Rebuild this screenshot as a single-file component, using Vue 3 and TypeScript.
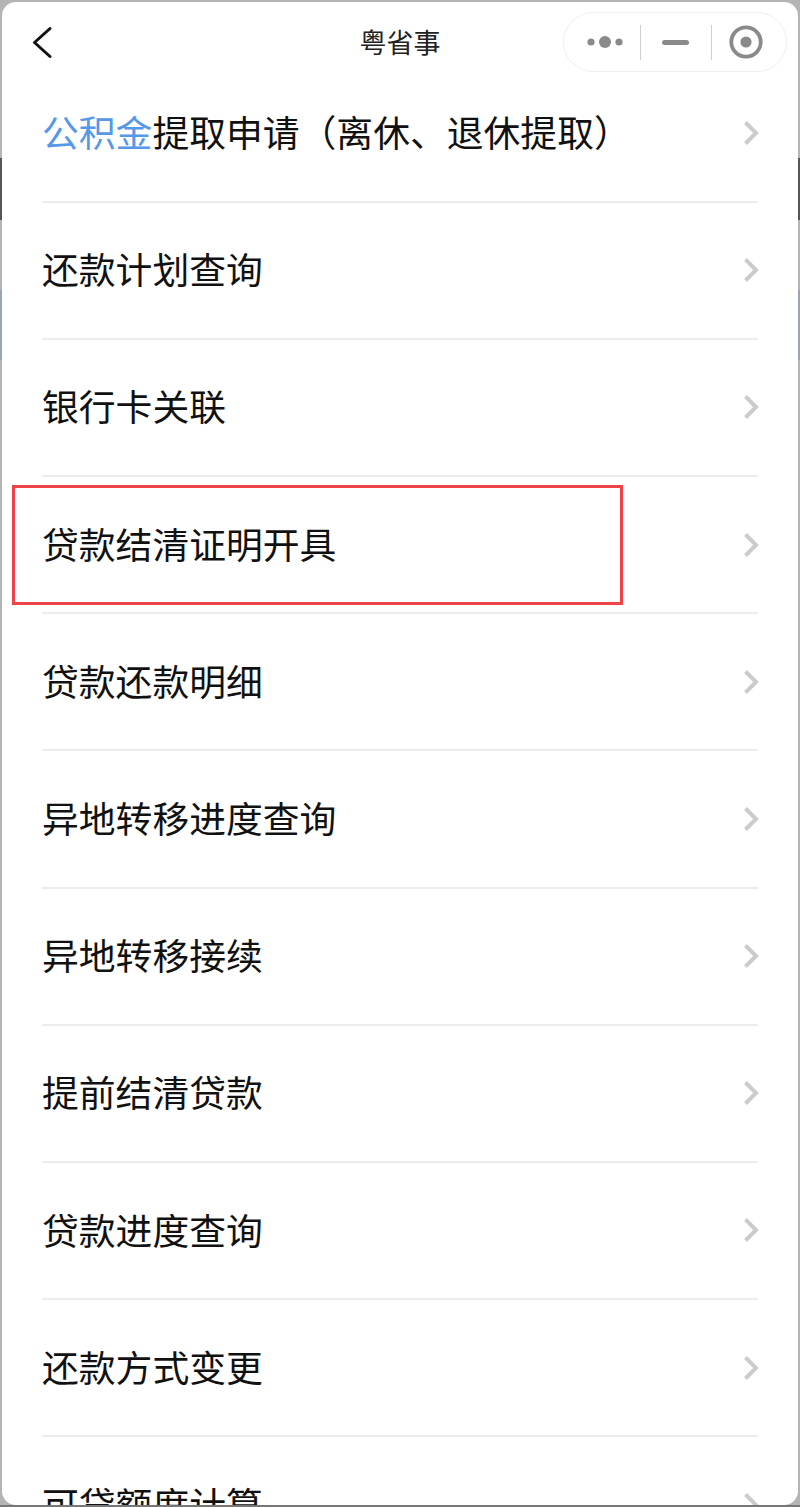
<script setup lang="ts">
interface Row { accent?: string; text: string; marked?: boolean }
const rows: Row[] = [
  { accent: '公积金', text: '提取申请（离休、退休提取）' },
  { text: '还款计划查询' },
  { text: '银行卡关联' },
  { text: '贷款结清证明开具', marked: true },
  { text: '贷款还款明细' },
  { text: '异地转移进度查询' },
  { text: '异地转移接续' },
  { text: '提前结清贷款' },
  { text: '贷款进度查询' },
  { text: '还款方式变更' },
  { text: '可贷额度计算' },
]
</script>

<template>
  <div class="screen">
    <div class="window">
      <header class="nav">
        <svg class="back" width="28" height="36" viewBox="0 0 28 36" fill="none">
          <path d="M22 4.5 L6.5 18.5 L22 32.5" stroke="#111" stroke-width="3" stroke-linecap="round" stroke-linejoin="round" />
        </svg>
        <div class="title">粤省事</div>
        <div class="capsule">
          <svg class="dots" width="40" height="16" viewBox="0 0 40 16">
            <circle cx="6" cy="8" r="3.6" fill="#8a8a8a" />
            <circle cx="20" cy="8" r="6" fill="#8a8a8a" />
            <circle cx="34" cy="8" r="3.6" fill="#8a8a8a" />
          </svg>
          <span class="divider"></span>
          <span class="minus"></span>
          <span class="divider"></span>
          <svg class="target" width="36" height="36" viewBox="0 0 36 36">
            <circle cx="18" cy="18" r="14.7" fill="none" stroke="#8a8a8a" stroke-width="3.8" />
            <circle cx="18" cy="18" r="5.6" fill="#8a8a8a" />
          </svg>
        </div>
      </header>
      <ul class="list">
        <li v-for="row in rows" :key="row.text" class="row">
          <span class="label"><span v-if="row.accent" class="accent">{{ row.accent }}</span>{{ row.text }}</span>
          <svg class="chev" width="16" height="26" viewBox="0 0 16 26" fill="none">
            <path d="M2.5 2.5 L13 13 L2.5 23.5" stroke="#cbcbcb" stroke-width="4" />
          </svg>
          <span v-if="row.marked" class="mark"></span>
        </li>
      </ul>
    </div>
  </div>
</template>

<style>
html, body { margin: 0; background: #b0b0b0; }
</style>

<style scoped>
.screen {
  width: 800px;
  height: 1507px;
  padding: 2px;
  box-sizing: border-box;
  background: linear-gradient(
    to bottom,
    #b4b4b4 0, #b4b4b4 158px,
    #555 158px, #555 220px,
    #b4b4b4 220px, #b4b4b4 290px,
    #9aa5b5 290px, #9aa5b5 360px,
    #b4b4b4 360px, #b4b4b4 1505px,
    #777 1505px, #777 1507px
  );
  overflow: hidden;
  font-family: "Noto Sans CJK SC", "Noto Sans", sans-serif;
}
.window {
  height: 1503px;
  background: #fff;
  border-radius: 14px;
  overflow: hidden;
  position: relative;
}
.nav {
  height: 63.4px;
  position: relative;
  display: flex;
  align-items: center;
  justify-content: center;
}
.back { position: absolute; left: 26px; top: 22px; }
.title { font-size: 27px; color: #222; line-height: 1; margin-top: 15px; }
.capsule {
  position: absolute;
  left: 561px;
  top: 10px;
  width: 224px;
  height: 60px;
  box-sizing: border-box;
  border: 1.5px solid #efefef;
  border-radius: 30px;
  display: grid;
  grid-template-columns: 76px 1px 70px 1px 1fr;
  align-items: center;
  justify-items: center;
}
.divider { width: 1px; height: 35px; background: #cfcfcf; }
.dots { display: block; margin-left: 6px; }
.minus { width: 27px; height: 5px; border-radius: 3px; background: #8a8a8a; margin-right: 2px; margin-top: 1px; }
.target { display: block; margin-right: 6px; }
.list { list-style: none; margin: 0; padding: 0 40px; }
.row {
  height: 137.2px;
  box-sizing: border-box;
  border-bottom: 2px solid #ececec;
  display: flex;
  align-items: center;
  justify-content: space-between;
  position: relative;
}
.label { font-size: 36.8px; color: #111; line-height: 1; margin-bottom: 3px; }
.accent { color: #5597e8; }
.chev { display: block; margin-right: -1px; }
.mark {
  position: absolute;
  left: -30px;
  top: 7.8px;
  width: 611px;
  height: 120px;
  box-sizing: border-box;
  border: 3px solid #ee4347;
}
</style>
